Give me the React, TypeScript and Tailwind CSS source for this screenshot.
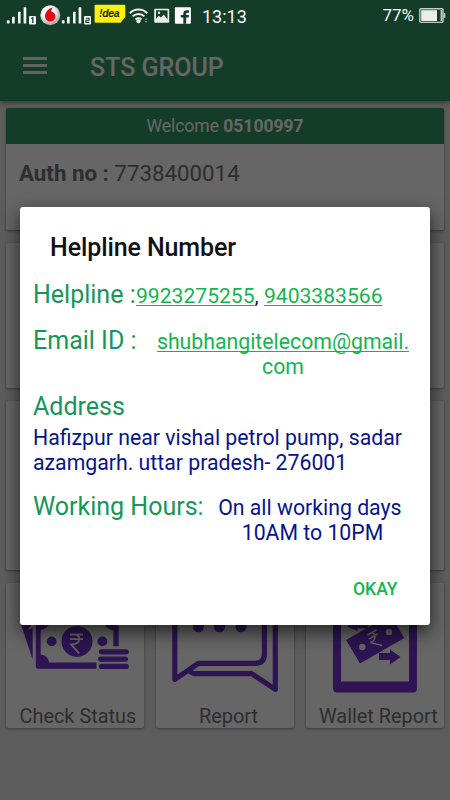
import type { ReactNode } from "react"

function Signal({ sim }: { sim: string }) {
  return (
    <svg width="31" height="22" viewBox="0 0 31 22" className="shrink-0">
      <g fill="#f4f6f5">
        <rect x="0.8" y="14.3" width="2.8" height="3.2" rx="0.8" />
        <rect x="6" y="10.8" width="2.7" height="6.7" rx="0.5" />
        <rect x="12" y="5.8" width="2.6" height="11.7" rx="0.5" />
        <rect x="17.6" y="1.2" width="2.7" height="16.3" rx="0.5" />
        <rect x="23" y="10" width="7" height="8.5" rx="1" />
      </g>
      {sim === "1" ? (
        <path d="M25.2 12.5 26.8 11.8V17" fill="none" stroke="#153d29" strokeWidth="1.3" />
      ) : (
        <path d="M24.6 12.2H28V14.2H24.9V16.4H28.4" fill="none" stroke="#153d29" strokeWidth="1.1" />
      )}
    </svg>
  )
}

function StatusBar() {
  return (
    <div className="relative z-10 flex h-8 w-full shrink-0 pl-[6px] text-[#f4f6f5]">
      <div className="flex pt-[6px]">
        <Signal sim="1" />
      </div>
      <svg width="21" height="21" viewBox="0 0 21 21" className="ml-[3px] mt-[5px] shrink-0">
        <defs>
          <radialGradient id="ball" cx="0.4" cy="0.35" r="0.65">
            <stop offset="0.5" stopColor="#f4f4f4" />
            <stop offset="1" stopColor="#a2a2a2" />
          </radialGradient>
        </defs>
        <circle cx="10.3" cy="10.3" r="10" fill="url(#ball)" />
        <path
          d="M12.800 2.400C10 2.600 5 6.200 5 11.300a5.200 5.200 0 0 0 10.400.2c0-2.700-1.500-4.400-4.200-5.100C11.300 4.600 12 3.200 12.800 2.400z"
          fill="#e20a12"
        />
      </svg>
      <div className="flex pt-[6px]">
        <Signal sim="2" />
      </div>
      <div className="relative ml-[2px] mt-[4px] h-[20px] w-[32px] shrink-0">
        <svg width="32" height="20" viewBox="0 0 32 20" className="absolute inset-0">
          <path d="M1.500.8H30.500Q31.300.8 31.300 1.600V13L26.500 18.700H1.500Q.6 18.700.6 17.800V1.700Q.6.8 1.500.8z" fill="#fdf10a" />
        </svg>
        <span className="relative block pt-[3px] pl-[5px] font-['Liberation_Sans',sans-serif] text-[10.5px] leading-[13px] font-bold tracking-[-0.3px] italic text-[#1b1b12]">
          <span className="text-[#1434a0]">!</span>dea
        </span>
      </div>
      <svg width="20" height="18" viewBox="0 0 20 18" className="ml-[3px] mt-[7px] shrink-0" fill="none" stroke="#e9eeeb">
        <path d="M.8 6.200a12 12 0 0 1 17.400 0" strokeWidth="2" />
        <path d="M3.600 9.400a8.200 8.200 0 0 1 11.800 0" strokeWidth="2" />
        <path d="M6.500 12.400a4.400 4.400 0 0 1 6 0" strokeWidth="2" />
        <circle cx="9.500" cy="14.200" r="1.700" fill="#e9eeeb" />
        <path d="M15.700 12.800 17 11.300 18.300 12.800zM15.700 14.300 17 15.800 18.300 14.300z" fill="#9fb0a7" stroke="none" />
      </svg>
      <svg width="16" height="16" viewBox="0 0 16 16" className="ml-[5px] mt-[8px] shrink-0">
        <rect x=".2" y=".7" width="15" height="14" rx="1" fill="#e9eeeb" />
        <path d="M2 2.300H13.500V11.500L9.800 6.600 7 9.600 4.600 7.800 2 10.800z" fill="#153d29" />
        <circle cx="5" cy="4.800" r="1.200" fill="#e9eeeb" />
      </svg>
      <svg width="18" height="18" viewBox="0 0 18 18" className="ml-[4px] mt-[7px] shrink-0">
        <rect x=".9" y=".3" width="16" height="16.500" rx="1" fill="#fff" />
        <path d="M15 3.300H12.800Q9.300 3.300 9.300 6.700V8H6.800V10.600H9.300V16.800H12.200V10.600H14.600L15 8H12.200V7Q12.200 5.800 13.400 5.800H15z" fill="#153d29" />
      </svg>
      <span className="ml-[10px] mt-[6px] text-[18px] leading-[22px]">13:13</span>
      <span className="ml-auto mt-[5px] text-[17px] leading-[20px]">77%</span>
      <svg width="27" height="16" viewBox="0 0 27 16" className="ml-[5px] mr-[4px] mt-[8px] shrink-0">
        <rect x=".8" y=".8" width="23.200" height="13.600" rx="1" fill="#153d29" stroke="#c3cbc7" strokeWidth="1.400" />
        <rect x="2.200" y="2.200" width="15.800" height="10.800" fill="#e9eeeb" />
        <rect x="21.600" y="2" width="1.600" height="11" fill="#c3cbc7" />
        <rect x="24.500" y="5" width="1.800" height="5" fill="#c3cbc7" />
      </svg>
    </div>
  )
}

function StatusIcon() {
  return (
    <svg width="138" height="145" viewBox="0 0 138 145" className="block" fill="#7333cd">
      <path d="M14.500 40H27L21.500 47 26.700 45V76.500z" />
      <path
        fillRule="evenodd"
        d="M32 26H111Q112.700 26 112.700 28V63.300H107.300V47.500Q100 46.500 97.500 38H44.500Q43 45 34.700 47.500V71.800Q41 71.500 43.300 79.500H90.500V85.700H32Q29.800 85.700 29.800 83.500V28Q29.800 26 32 26z"
      />
      <circle cx="71" cy="58.400" r="15.500" />
      <circle cx="45.700" cy="58.400" r="4.900" />
      <circle cx="96.300" cy="58.400" r="4.900" />
      <g fill="none" stroke="#7333cd" strokeWidth="5.300" strokeLinecap="round">
        <path d="M95.500 68.800H120.200M94.700 76.100H119.400M95.500 83.400H120.200" />
      </g>
      <path
        d="M64 51.500H77M64 56.200H77M64 51.500H68Q73.300 51.500 73.300 56T66.500 61.400H65L73.300 70.500"
        fill="none"
        stroke="#fff"
        strokeWidth="1.800"
      />
    </svg>
  )
}

function ReportIcon() {
  return (
    <svg width="138" height="145" viewBox="0 0 138 145" className="block">
      <g fill="none" stroke="#7333cd" strokeWidth="5.200" strokeLinejoin="round">
        <path d="M18.800 24H99Q108.400 24 108.400 33V71Q108.400 80.400 99 80.400H42.300L18.800 96.300z" />
        <path d="M108 33H119.300V106.300L95.700 90.700H38L33 88" />
      </g>
      <g fill="#7333cd">
        <rect x="37" y="33" width="11" height="16.300" rx="5.500" />
        <rect x="58" y="33" width="11" height="16.300" rx="5.500" />
        <rect x="79.500" y="33" width="11" height="16.300" rx="5.500" />
      </g>
    </svg>
  )
}

function WalletIcon() {
  return (
    <svg width="138" height="145" viewBox="0 0 138 145" className="block">
      <path
        fillRule="evenodd"
        fill="#7333cd"
        d="M31 15H107Q111 15 111 19V105Q111 109.500 107 109.500H31Q27 109.500 27 105V19Q27 15 31 15zM35 25V98.500H103V25z"
      />
      <g fill="#7333cd">
        <path d="M40 57 84 31.500 98.300 55 54 80.500z" />
        <path d="M41 43.500 51 36V39.500H62V45.500H51.500V48z" />
        <path d="M73 70H84V66.500L94.500 74 84 81.500V77H73z" />
      </g>
      <circle cx="56.300" cy="64" r="3.200" fill="#fff" />
      <circle cx="83" cy="48.900" r="3.200" fill="#fff" />
      <path d="M61.500 52 70.500 47M63 56 72 50.700M64 50.500Q69.500 49.500 69 54T64.500 59.500L76 62.500" fill="none" stroke="#fff" strokeWidth="1.500" />
    </svg>
  )
}

const tiles = [
  { label: "Check Status", icon: StatusIcon, inset: "pl-[13.5px]" },
  { label: "Report", icon: ReportIcon, inset: "pl-[43px]" },
  { label: "Wallet Report", icon: WalletIcon, inset: "pl-[13px]" },
]

function Card({ className = "", children }: { className?: string; children?: ReactNode }) {
  return (
    <div className={`overflow-hidden rounded-[2px] bg-white shadow-[0_1px_3px_rgba(0,0,0,0.4)] ${className}`}>
      {children}
    </div>
  )
}

function Home() {
  return (
    <div className="flex h-full flex-col bg-[#e9e9e9] text-[#737373]">
      <header className="z-10 flex h-[101px] shrink-0 items-center bg-[#349866] pt-[33px] pl-[23px] text-white shadow-[0_2px_5px_rgba(0,0,0,0.4)]">
        <div className="mb-[3px] flex w-6 flex-col gap-[4.5px]">
          <div className="h-[2.5px] bg-white/95" />
          <div className="h-[2.5px] bg-white/95" />
          <div className="h-[2.5px] bg-white/95" />
        </div>
        <h1 className="mt-[2px] ml-[43px] text-[25px] leading-[30px] font-medium">STS GROUP</h1>
      </header>
      <main className="flex flex-col gap-[13px] px-[6px] pt-[7px]">
        <Card className="h-[122px]">
          <div className="h-[35.5px] bg-[#349866] text-center text-[17.5px] leading-[37px] text-white">
            Welcome <b>05100997</b>
          </div>
          <div className="pt-[15px] pl-[13px] text-[22.3px] leading-[28px]">
            <b>Auth no :</b> 7738400014
          </div>
        </Card>
        <div className="grid grid-cols-3 gap-[12px]">
          <Card className="h-[145px]" />
          <Card className="h-[145px]" />
          <Card className="h-[145px]" />
        </div>
        <div className="grid grid-cols-3 gap-[12px]">
          <Card className="h-[169px]" />
          <Card className="h-[169px]" />
          <Card className="h-[169px]" />
        </div>
        <div className="grid grid-cols-3 gap-[12px]">
          {tiles.map((tile) => (
            <Card key={tile.label} className="h-[145px]">
              <div className="h-[119px] overflow-hidden">
                <tile.icon />
              </div>
              <div className={`pt-px text-[19.9px] leading-[28px] whitespace-nowrap ${tile.inset}`}>{tile.label}</div>
            </Card>
          ))}
        </div>
      </main>
    </div>
  )
}

function HelplineDialog() {
  return (
    <div className="flex h-[418px] w-[410px] flex-col rounded-[3px] bg-white pl-[13px] text-[21.25px] leading-[25px] text-[#06138f] shadow-[0_7px_18px_1px_rgba(0,0,0,0.6)]">
      <h2 className="pt-[26px] pl-[17px] text-[25px] leading-[30px] font-medium tracking-[-0.1px] text-[#111111]">
        Helpline Number
      </h2>
      <div className="mt-[17px] flex h-[30px] items-baseline">
        <span className="w-[103px] text-[25px] leading-[30px] whitespace-nowrap text-[#17965a]">Helpline :</span>
        <span className="text-[21.1px]">
          <Underlined>9923275255</Underlined>, <Underlined>9403383566</Underlined>
        </span>
      </div>
      <div className="mt-[16px] flex h-[51px] items-baseline">
        <span className="w-[117px] text-[25px] leading-[30px] text-[#17965a]">Email ID :</span>
        <span className="w-[266px] text-center text-[#13b551]">
          <Underlined>shubhangitelecom@gmail.</Underlined>
          <br />
          com
        </span>
      </div>
      <div className="mt-[15px] text-[25px] leading-[30px] text-[#17965a]">Address</div>
      <div className="mt-[3px]">
        Hafizpur near vishal petrol pump, sadar
        <br />
        azamgarh. uttar pradesh- 276001
      </div>
      <div className="mt-[17px] flex items-baseline">
        <span className="w-[178px] text-[25px] leading-[30px] text-[#17965a]">Working Hours:</span>
        <span className="w-[203px] text-center">
          On all working days&nbsp;
          <br />
          10AM to 10PM
        </span>
      </div>
      <button className="mt-[33px] mr-[32.5px] self-end text-[17.5px] leading-[22px] font-medium text-[#13b551]">OKAY</button>
    </div>
  )
}

function Underlined({ children }: { children: string }) {
  return (
    <span className="text-[#13b551] underline decoration-[1px] underline-offset-[2px] [text-decoration-skip-ink:none]">
      {children}
    </span>
  )
}

export default function App() {
  return (
    <div className="relative h-[800px] w-[450px] overflow-hidden font-['Roboto',sans-serif]">
      <Home />
      <div className="absolute inset-0 z-20 flex flex-col bg-black/60">
        <StatusBar />
        <div className="flex flex-1 items-center justify-center">
          <HelplineDialog />
        </div>
      </div>
    </div>
  )
}
